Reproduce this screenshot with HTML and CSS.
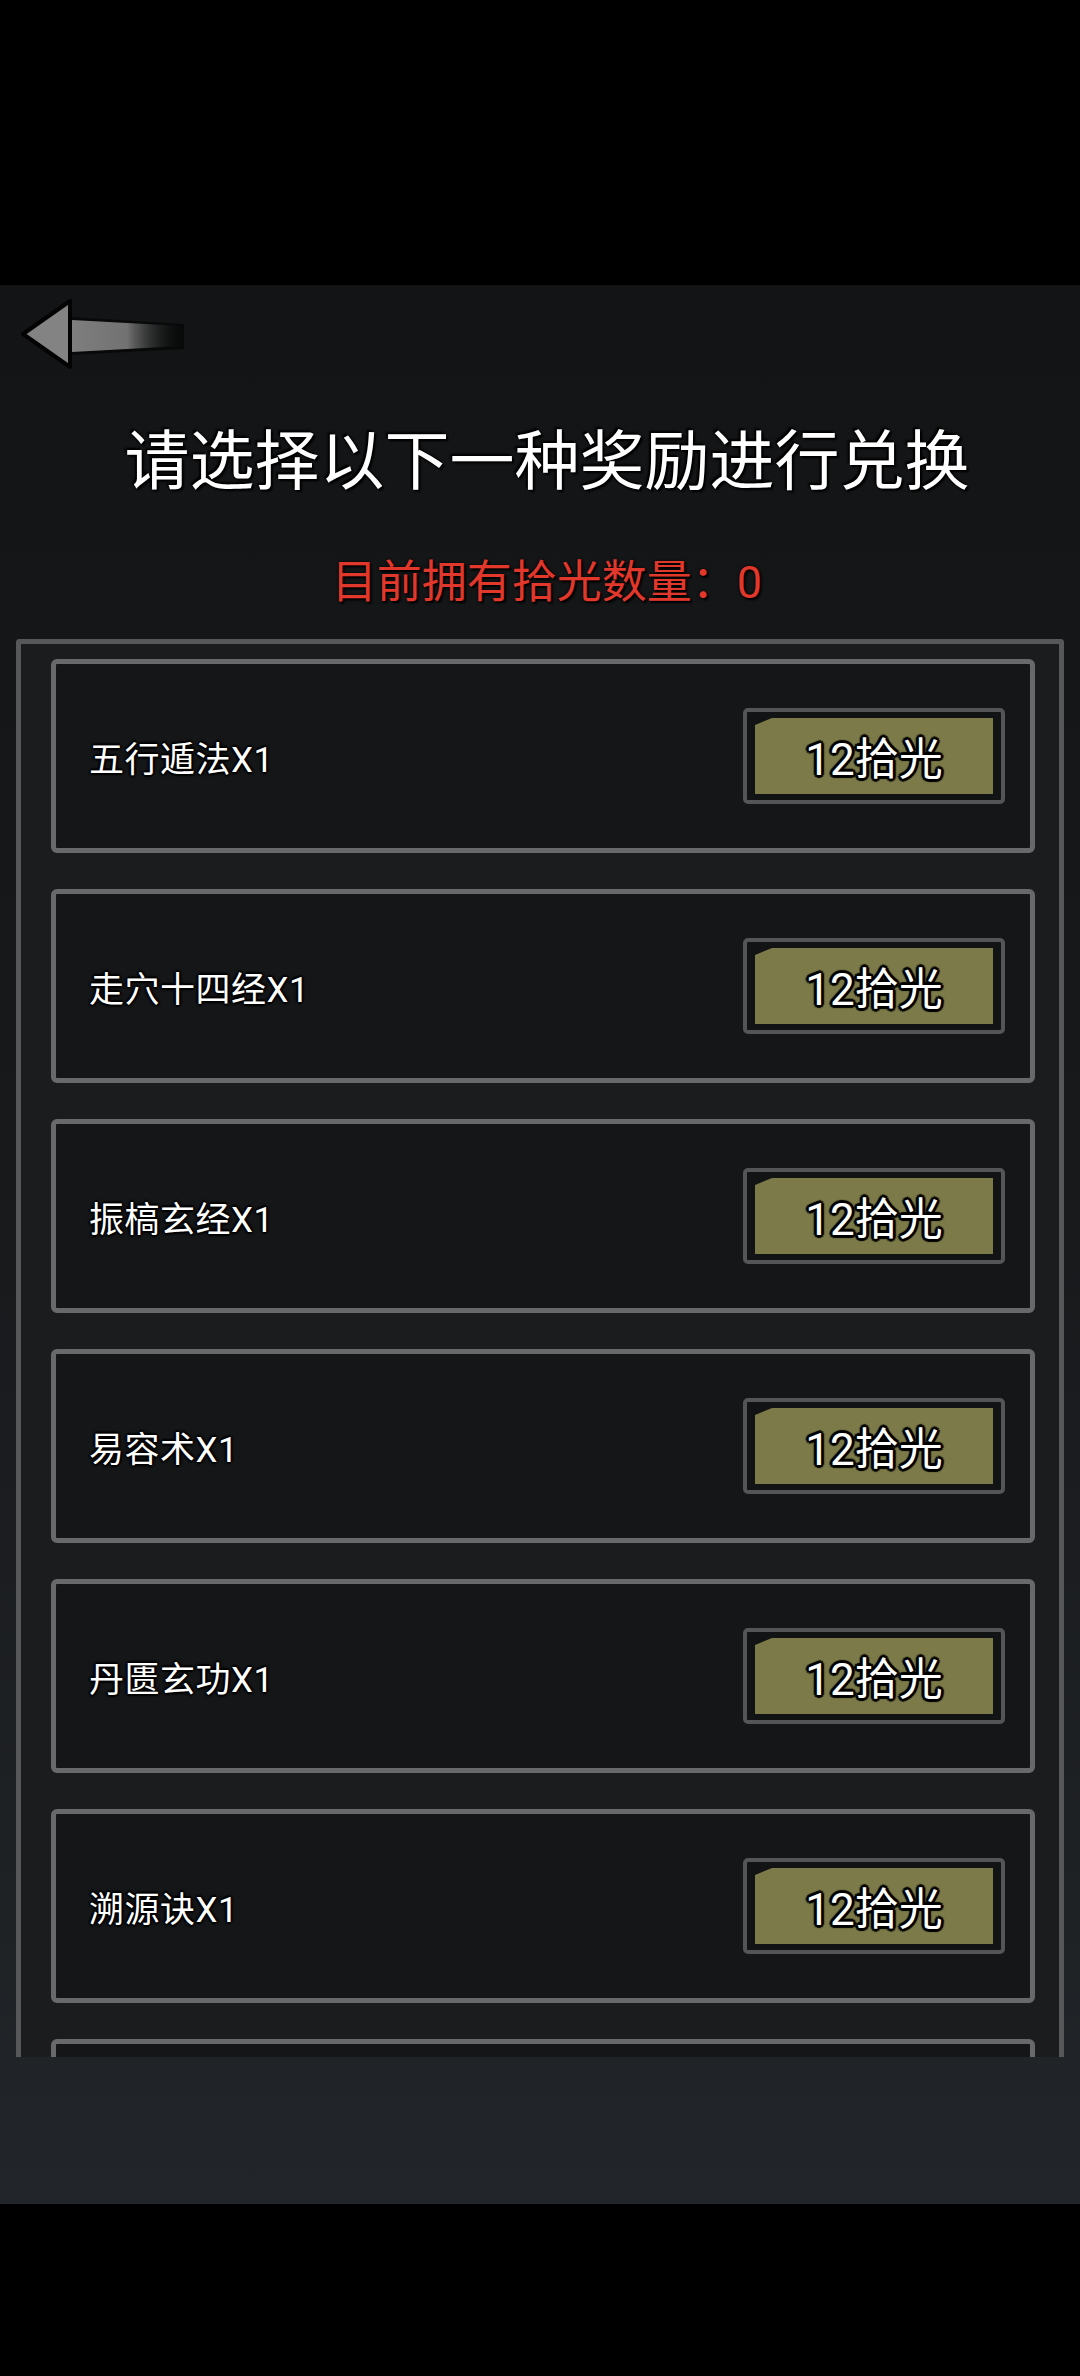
FILE: index.html
```html
<!DOCTYPE html>
<html lang="zh-CN">

<head>
    <meta charset="UTF-8">
    <meta name="viewport" content="width=device-width, initial-scale=1.0">
    <title>兑换</title>
    <link rel="stylesheet" href="styles.css">
</head>

<body>
    <div class="status-bar"></div>

    <div class="screen">
        <div class="back-row">
            <svg class="back" width="180" height="80" viewBox="0 0 180 80">
                <defs>
                    <linearGradient id="shaft" x1="0" y1="0" x2="1" y2="0">
                        <stop offset="0" stop-color="#7e7e7e" />
                        <stop offset="0.5" stop-color="#727272" />
                        <stop offset="1" stop-color="#1a1b1d" stop-opacity="0" />
                    </linearGradient>
                </defs>
                <path d="M56 20 L170 27 L170 52 L56 58 Z" fill="#000" opacity="0.55" />
                <path d="M58 23 L168 29 L168 49 L58 55 Z" fill="url(#shaft)" />
                <path d="M9 37 L56 4 L56 70 Z" fill="#838383" stroke="#030303" stroke-width="4" stroke-linejoin="round" />
            </svg>
        </div>

        <h1 class="title">请选择以下一种奖励进行兑换</h1>
        <p class="count">目前拥有拾光数量：0</p>

        <div class="panel">
            <div class="item">
                <span class="name">五行遁法X1</span>
                <div class="price"><span class="price-in">12拾光</span></div>
            </div>
            <div class="item">
                <span class="name">走穴十四经X1</span>
                <div class="price"><span class="price-in">12拾光</span></div>
            </div>
            <div class="item">
                <span class="name">振槁玄经X1</span>
                <div class="price"><span class="price-in">12拾光</span></div>
            </div>
            <div class="item">
                <span class="name">易容术X1</span>
                <div class="price"><span class="price-in">12拾光</span></div>
            </div>
            <div class="item">
                <span class="name">丹匮玄功X1</span>
                <div class="price"><span class="price-in">12拾光</span></div>
            </div>
            <div class="item">
                <span class="name">溯源诀X1</span>
                <div class="price"><span class="price-in">12拾光</span></div>
            </div>
            <div class="item"></div>
        </div>
    </div>

    <div class="nav-bar"></div>
</body>

</html>
```

FILE: styles.css
```css
* {
    margin: 0;
    padding: 0;
    box-sizing: border-box;
}

body {
    width: 1080px;
    height: 2376px;
    background: #000;
    font-family: Roboto, "Noto Sans CJK SC", sans-serif;
    color: #fff;
    overflow: hidden;
}

.status-bar {
    height: 285px;
    background: #000;
}

.nav-bar {
    height: 172px;
    background: #000;
}

.screen {
    height: 1919px;
    background: linear-gradient(180deg, #131416 0%, #17191b 45%, #222529 100%);
    overflow: hidden;
}

.back-row {
    height: 137px;
    padding: 12px 0 0 14px;
}

.back {
    display: block;
}

.title {
    height: 80px;
    padding-left: 14px;
    font-size: 65px;
    line-height: 80px;
    font-weight: 400;
    text-align: center;
    text-shadow: 0 0 3px #000, 2px 2px 2px #000, -2px -2px 2px #000;
}

.count {
    margin-top: 53px;
    height: 56px;
    padding-left: 14px;
    font-size: 45px;
    line-height: 56px;
    text-align: center;
    color: #e2372b;
    text-shadow: 0 0 3px #000, 2px 2px 2px #000;
}

.panel {
    margin: 28px 0 0 16px;
    width: 1048px;
    height: 1418px;
    border: 5px solid #56585a;
    border-bottom: none;
    border-radius: 4px 4px 0 0;
    background: #1b1c1e;
    padding: 15px 24px 0 30px;
    overflow: hidden;
    display: flex;
    flex-direction: column;
    gap: 36px;
}

.item {
    flex: none;
    height: 194px;
    border: 5px solid #68696b;
    border-radius: 6px;
    background: #151618;
    display: flex;
    align-items: center;
    justify-content: space-between;
    padding: 0 25px 0 33px;
}

.name {
    font-size: 35px;
    letter-spacing: 0.5px;
    text-shadow: 2px 0 2px #000, -2px 0 2px #000, 0 2px 2px #000, 0 -2px 2px #000;
}

.price {
    width: 262px;
    height: 96px;
    border: 4px solid #545557;
    border-radius: 5px;
    background: #121314;
    padding: 6px 8px;
}

.price-in {
    display: flex;
    align-items: center;
    justify-content: center;
    height: 100%;
    background: #7b7a48;
    clip-path: polygon(0 7px, 17px 0, 100% 0, 100% 100%, 0 100%);
    font-size: 44px;
    text-shadow: 3px 0 1px #000, -3px 0 1px #000, 0 3px 1px #000, 0 -3px 1px #000,
        2px 2px 1px #000, -2px -2px 1px #000, 2px -2px 1px #000, -2px 2px 1px #000;
}
```
